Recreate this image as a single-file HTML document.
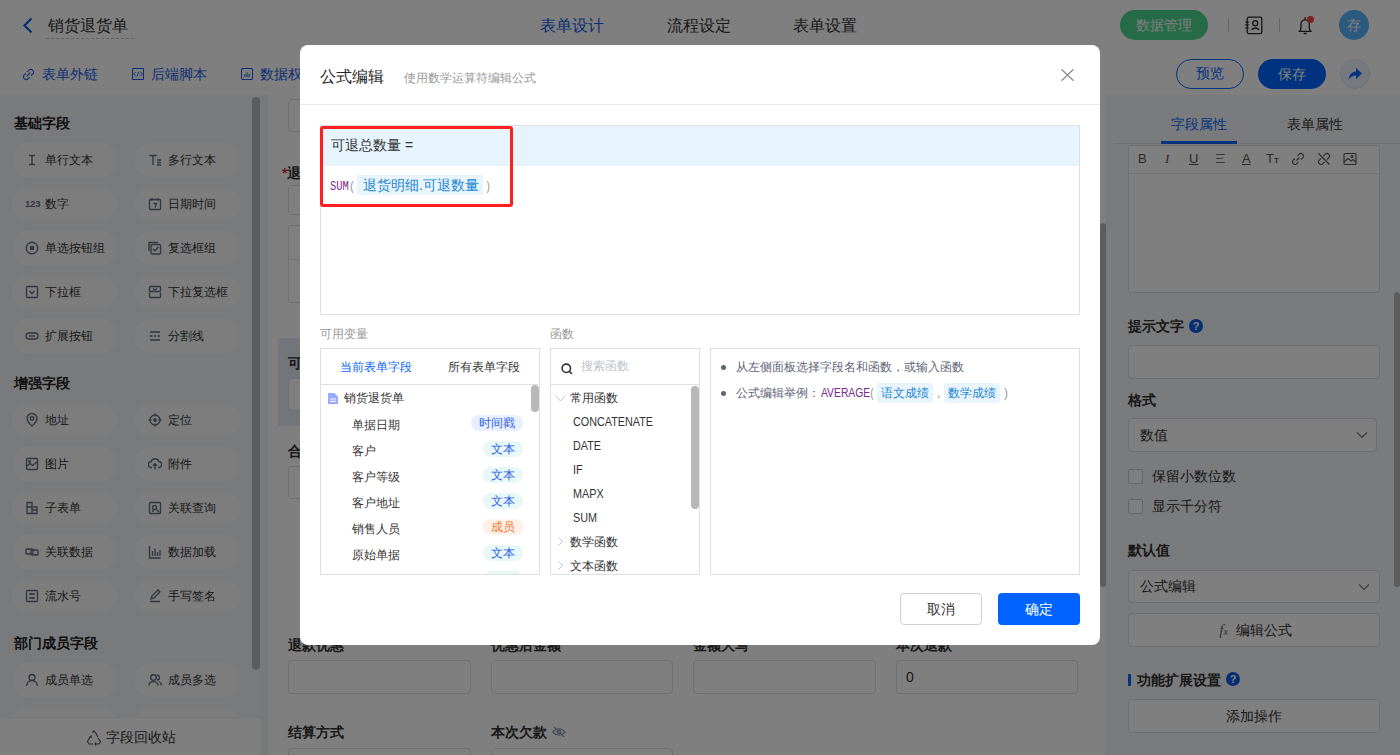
<!DOCTYPE html>
<html><head><meta charset="utf-8">
<style>
*{box-sizing:border-box;margin:0;padding:0}
html,body{width:1400px;height:755px;overflow:hidden;background:#f0f2f5;font-family:"Liberation Sans",sans-serif;color:#333}
.a{position:absolute}
#hdr{left:0;top:0;width:1400px;height:51px;background:#fff;border-bottom:1px solid #e6e6e6}
#tb{left:0;top:50px;width:1400px;height:45px;background:#fff}
#lp{left:0;top:95px;width:262px;height:660px;background:#f3f4f8}
#mid{left:262px;top:95px;width:846px;height:660px;background:#f0f2f5}
#rp{left:1108px;top:95px;width:292px;height:660px;background:#f5f6f9}
#ov{left:0;top:0;width:1400px;height:755px;background:rgba(0,0,0,.5)}
#modal{left:300px;top:45px;width:800px;height:600px;background:#fff;border-radius:8px}
.st{font-size:14px;font-weight:bold;line-height:20px;color:#222}
.pill{width:105px;height:34px;border-radius:17px;background:#fafbfc}
.pill .ic{position:absolute;left:13px;top:10px;width:14px;height:14px;line-height:14px}
.pill .ic svg{display:block}
.pill .pt{position:absolute;left:33px;top:8px;font-size:12px;line-height:18px;color:#333}
.lbl{font-size:14px;font-weight:bold;line-height:20px;color:#333}
.inp{border:1px solid #dcdfe6;border-radius:4px;background:#fff}
.rtb span,.rtb svg{position:absolute;top:5px;font-size:13px;line-height:18px;color:#555}
.q{width:14px;height:14px;border-radius:50%;background:#0a5ce6;color:#fff;font-size:11px;font-weight:bold;line-height:14px;text-align:center}
.cb{width:15px;height:15px;border:1px solid #c8cbd2;border-radius:2px;background:#fff}
.vr{position:absolute;left:0;width:220px;height:20px}
.vr span{position:absolute;left:31px;top:1px;font-size:12px;line-height:17px;color:#333}
.vr b{position:absolute;left:162px;top:-1px;width:40px;height:16px;border-radius:8px;font-weight:normal;font-size:12px;line-height:16px;text-align:center}
.bg1{background:#e8f0ff;color:#2f62ea}
.bg2{background:#e8f7f7;color:#2f62ea}
.bg3{background:#fff0e8;color:#ee7a30}
.fn{position:absolute;left:22px;font-size:12px;line-height:17px;color:#333;transform:scaleX(.9);transform-origin:0 0}
</style></head>
<body>
<div id="hdr" class="a">
  <svg class="a" style="left:22px;top:17px" width="12" height="17" viewBox="0 0 12 17"><path d="M9.5 1.5 L2.5 8.5 L9.5 15.5" fill="none" stroke="#0a5ce6" stroke-width="2.2"/></svg>
  <div class="a" style="left:48px;top:15px;font-size:16px;color:#333;line-height:22px">销货退货单</div>
  <div class="a" style="left:46px;top:38px;width:88px;border-top:1px dashed #c8c8c8"></div>
  <div class="a" style="left:540px;top:15px;font-size:16px;color:#1a5ce6;line-height:22px">表单设计</div>
  <div class="a" style="left:667px;top:15px;font-size:16px;color:#333;line-height:22px">流程设定</div>
  <div class="a" style="left:793px;top:15px;font-size:16px;color:#333;line-height:22px">表单设置</div>
  <div class="a" style="left:1120px;top:10px;width:88px;height:30px;border-radius:15px;background:#4cd68e;color:#fff;font-size:14px;line-height:30px;text-align:center">数据管理</div>
  <div class="a" style="left:1228px;top:18px;width:1px;height:14px;background:#ccc"></div>
  <svg class="a" style="left:1245px;top:16px" width="18" height="19" viewBox="0 0 18 19" fill="none" stroke="#2a2a2a" stroke-width="1.3"><rect x="2.2" y="1.2" width="14.6" height="16.4" rx="1.6"/><circle cx="10.3" cy="7.2" r="2.5"/><path d="M6.5 13.8Q10.3 10.2 14.1 13.8"/><path d="M0.3 6.1h3.6M0.3 8.9h3.6M0.3 12h3.6" stroke-width="1.1"/></svg>
  <div class="a" style="left:1279px;top:18px;width:1px;height:14px;background:#ccc"></div>
  <svg class="a" style="left:1296px;top:15px" width="20" height="20" viewBox="0 0 20 20" fill="none" stroke="#2a2a2a" stroke-width="1.3"><path d="M2.6 16.3H15.7M3.6 16.3Q5 15 5 12.5V9A4.15 4.15 0 0 1 13.3 9V12.5Q13.3 15 14.7 16.3M9.15 2.2V4.8M7.6 18.5H10.7"/></svg>
  <div class="a" style="left:1307px;top:16px;width:6.5px;height:6.5px;border-radius:50%;background:#f04848"></div>
  <div class="a" style="left:1339px;top:10px;width:30px;height:30px;border-radius:50%;background:#5ab4ff;color:#fff;font-size:14px;line-height:30px;text-align:center">存</div>
</div>
<div id="tb" class="a">
  
  <svg class="a" style="left:22px;top:17.5px" width="13" height="13" viewBox="0 0 13 13" fill="none" stroke="#1a5ce6" stroke-width="1.05"><path d="M4.6 8.4L8.4 4.6"/><path d="M5.3 3.9L7.6 1.6A2.95 2.95 0 0 1 11.4 5.4L9.1 7.7M7.7 9.1L5.4 11.4A2.95 2.95 0 0 1 1.6 7.6L3.9 5.3"/></svg>
  <div class="a" style="left:42px;top:14px;font-size:14px;color:#1a5ce6;line-height:20px">表单外链</div>
  <svg class="a" style="left:132px;top:18px" width="12" height="12" viewBox="0 0 12 12" fill="none" stroke="#1a5ce6" stroke-width="1.05"><rect x="0.5" y="0.5" width="11" height="11" rx="0.8"/><path d="M3.6 3.9L1.7 6L3.6 8.1M8.4 3.9L10.3 6L8.4 8.1M7 3.6L5 8.4" stroke-width="0.9"/></svg>
  <div class="a" style="left:151px;top:14px;font-size:14px;color:#1a5ce6;line-height:20px">后端脚本</div>
  <svg class="a" style="left:241px;top:18px" width="12" height="12" viewBox="0 0 12 12" fill="none" stroke="#1a5ce6" stroke-width="1.05"><rect x="0.5" y="0.5" width="11" height="11" rx="1.2"/><path d="M3.8 9V6.3M6 9V4.5M8.2 9V5.8"/></svg>
  <div class="a" style="left:260px;top:14px;font-size:14px;color:#1a5ce6;line-height:20px">数据权限</div>
  <div class="a" style="left:1176px;top:9px;width:68px;height:30px;border-radius:15px;border:1.5px solid #0a66ff;color:#0a66ff;font-size:14px;line-height:27px;text-align:center">预览</div>
  <div class="a" style="left:1258px;top:9px;width:68px;height:30px;border-radius:15px;background:#0066ff;color:#fff;font-size:14px;line-height:30px;text-align:center">保存</div>
  <div class="a" style="left:1340px;top:9px;width:30px;height:30px;border-radius:50%;background:#eef3ff;border:1px solid #d8e2f5"></div>
  <svg class="a" style="left:1347px;top:16px" width="16" height="16" viewBox="0 0 16 16"><path d="M9 2 L15 7.5 L9 13 V9.5 Q4 9.5 1.5 14 Q2 6 9 5.5 Z" fill="#0a66ff"/></svg>
</div>
<div id="lp" class="a"><div class="a st" style="left:14px;top:18px">基础字段</div>
<div class="a pill" style="left:12px;top:48px"><span class="ic"><svg width="14" height="14" viewBox="0 0 14 14" fill="none" stroke="#646c80" stroke-width="1.35"><path d="M4 2.5h6M4 11.5h6M7 2.5v9"/></svg></span><span class="pt">单行文本</span></div>
<div class="a pill" style="left:135px;top:48px"><span class="ic"><svg width="14" height="14" viewBox="0 0 14 14" fill="none" stroke="#646c80" stroke-width="1.35"><path d="M1.5 2.5h7M5 2.5v9.5M9 7h4M9 9.5h4M9 12h4"/></svg></span><span class="pt">多行文本</span></div>
<div class="a pill" style="left:12px;top:92px"><span class="ic"><span style="font-size:9.5px;font-weight:bold;color:#646c80;letter-spacing:-0.2px;position:relative;top:-2px">123</span></span><span class="pt">数字</span></div>
<div class="a pill" style="left:135px;top:92px"><span class="ic"><svg width="14" height="14" viewBox="0 0 14 14" fill="none" stroke="#646c80" stroke-width="1.35"><rect x="1.5" y="2.5" width="11" height="10" rx="1"/><path d="M4 1v3M10 1v3M5.5 6.5h3l-1.5 4"/></svg></span><span class="pt">日期时间</span></div>
<div class="a pill" style="left:12px;top:136px"><span class="ic"><svg width="14" height="14" viewBox="0 0 14 14" fill="none" stroke="#646c80" stroke-width="1.35"><circle cx="7" cy="7" r="5.8"/><circle cx="7" cy="7" r="1.6" fill="#646c80"/></svg></span><span class="pt">单选按钮组</span></div>
<div class="a pill" style="left:135px;top:136px"><span class="ic"><svg width="14" height="14" viewBox="0 0 14 14" fill="none" stroke="#646c80" stroke-width="1.35"><path d="M1 10V1.5h9"/><rect x="3" y="3.5" width="9.5" height="9.5" rx="1"/><path d="M5 8l1.8 1.8L10.5 6"/></svg></span><span class="pt">复选框组</span></div>
<div class="a pill" style="left:12px;top:180px"><span class="ic"><svg width="14" height="14" viewBox="0 0 14 14" fill="none" stroke="#646c80" stroke-width="1.35"><rect x="1.5" y="1.5" width="11" height="11" rx="1"/><path d="M4.5 6l2.5 2.5L9.5 6"/></svg></span><span class="pt">下拉框</span></div>
<div class="a pill" style="left:135px;top:180px"><span class="ic"><svg width="14" height="14" viewBox="0 0 14 14" fill="none" stroke="#646c80" stroke-width="1.35"><rect x="1.5" y="1.5" width="11" height="5" rx="1"/><path d="M1.5 7.5v4a1 1 0 0 0 1 1h9a1 1 0 0 0 1-1v-4M5 3.5l2 1.5 2-1.5"/></svg></span><span class="pt">下拉复选框</span></div>
<div class="a pill" style="left:12px;top:224px"><span class="ic"><svg width="14" height="14" viewBox="0 0 14 14" fill="none" stroke="#646c80" stroke-width="1.35"><rect x="1" y="4" width="12" height="6" rx="3"/><path d="M4 7h6"/></svg></span><span class="pt">扩展按钮</span></div>
<div class="a pill" style="left:135px;top:224px"><span class="ic"><svg width="14" height="14" viewBox="0 0 14 14" fill="none" stroke="#646c80" stroke-width="1.35"><path d="M2 3h10M2 11h10M2 7h2.5M6 7h2M9.5 7h2.5"/></svg></span><span class="pt">分割线</span></div>
<div class="a st" style="left:14px;top:278px">增强字段</div>
<div class="a pill" style="left:12px;top:308px"><span class="ic"><svg width="14" height="14" viewBox="0 0 14 14" fill="none" stroke="#646c80" stroke-width="1.35"><path d="M7 13S2 8.5 2 5.5a5 5 0 0 1 10 0C12 8.5 7 13 7 13z"/><circle cx="7" cy="5.5" r="1.8"/></svg></span><span class="pt">地址</span></div>
<div class="a pill" style="left:135px;top:308px"><span class="ic"><svg width="14" height="14" viewBox="0 0 14 14" fill="none" stroke="#646c80" stroke-width="1.35"><circle cx="7" cy="7" r="5"/><circle cx="7" cy="7" r="1.2" fill="#646c80"/><path d="M7 0.5v3M7 10.5v3M0.5 7h3M10.5 7h3"/></svg></span><span class="pt">定位</span></div>
<div class="a pill" style="left:12px;top:352px"><span class="ic"><svg width="14" height="14" viewBox="0 0 14 14" fill="none" stroke="#646c80" stroke-width="1.35"><rect x="1.5" y="1.5" width="11" height="11" rx="1"/><path d="M1.5 9.5l3.5-3 2.5 2 5-4"/><circle cx="4.5" cy="4.5" r="0.8"/></svg></span><span class="pt">图片</span></div>
<div class="a pill" style="left:135px;top:352px"><span class="ic"><svg width="14" height="14" viewBox="0 0 14 14" fill="none" stroke="#646c80" stroke-width="1.35"><path d="M4 10.5H3.5a3 3 0 0 1-.3-6 4 4 0 0 1 7.6 0 3 3 0 0 1-.3 6H10M7 12.5V7M5 8.7l2-2 2 2"/></svg></span><span class="pt">附件</span></div>
<div class="a pill" style="left:12px;top:396px"><span class="ic"><svg width="14" height="14" viewBox="0 0 14 14" fill="none" stroke="#646c80" stroke-width="1.35"><path d="M2 1.5h5v11H2zM7 6h5v6.5H7M2 6h5M7 9h5"/></svg></span><span class="pt">子表单</span></div>
<div class="a pill" style="left:135px;top:396px"><span class="ic"><svg width="14" height="14" viewBox="0 0 14 14" fill="none" stroke="#646c80" stroke-width="1.35"><rect x="1.5" y="1.5" width="11" height="11" rx="1"/><circle cx="6.5" cy="6.5" r="2"/><path d="M8 8l3 3M4 10h2"/></svg></span><span class="pt">关联查询</span></div>
<div class="a pill" style="left:12px;top:440px"><span class="ic"><svg width="14" height="14" viewBox="0 0 14 14" fill="none" stroke="#646c80" stroke-width="1.35"><rect x="1" y="4" width="7" height="5" rx="1"/><rect x="6" y="5" width="7" height="5" rx="1"/></svg></span><span class="pt">关联数据</span></div>
<div class="a pill" style="left:135px;top:440px"><span class="ic"><svg width="14" height="14" viewBox="0 0 14 14" fill="none" stroke="#646c80" stroke-width="1.35"><path d="M1.5 1v12h11M4.5 11V6M7 11V3.5M9.5 11V7M12 11V5"/></svg></span><span class="pt">数据加载</span></div>
<div class="a pill" style="left:12px;top:484px"><span class="ic"><svg width="14" height="14" viewBox="0 0 14 14" fill="none" stroke="#646c80" stroke-width="1.35"><rect x="1.5" y="1.5" width="11" height="11" rx="1"/><path d="M4 5h6M4 9h6M6 4v2M8 8v2"/></svg></span><span class="pt">流水号</span></div>
<div class="a pill" style="left:135px;top:484px"><span class="ic"><svg width="14" height="14" viewBox="0 0 14 14" fill="none" stroke="#646c80" stroke-width="1.35"><path d="M2 12.5h10M3 10l1-3 6-6 2 2-6 6z"/></svg></span><span class="pt">手写签名</span></div>
<div class="a st" style="left:14px;top:538px">部门成员字段</div>
<div class="a pill" style="left:12px;top:568px"><span class="ic"><svg width="14" height="14" viewBox="0 0 14 14" fill="none" stroke="#646c80" stroke-width="1.35"><circle cx="7" cy="4.5" r="3"/><path d="M1.5 13a5.5 5.5 0 0 1 11 0"/></svg></span><span class="pt">成员单选</span></div>
<div class="a pill" style="left:135px;top:568px"><span class="ic"><svg width="14" height="14" viewBox="0 0 14 14" fill="none" stroke="#646c80" stroke-width="1.35"><circle cx="5.5" cy="4.5" r="2.8"/><path d="M0.8 12.5a4.8 4.8 0 0 1 9.4 0M9 2a2.5 2.5 0 0 1 0 5M11 8.5a4 4 0 0 1 2.3 4"/></svg></span><span class="pt">成员多选</span></div>
<div class="a pill" style="left:12px;top:612px"><span class="ic"><svg width="14" height="14" viewBox="0 0 14 14" fill="none" stroke="#646c80" stroke-width="1.35"><rect x="2" y="2" width="10" height="10"/></svg></span><span class="pt">部门单选</span></div>
<div class="a pill" style="left:135px;top:612px"><span class="ic"><svg width="14" height="14" viewBox="0 0 14 14" fill="none" stroke="#646c80" stroke-width="1.35"><rect x="2" y="2" width="10" height="10"/></svg></span><span class="pt">部门多选</span></div><div class="a" style="left:252px;top:2px;width:8px;height:573px;border-radius:4px;background:#b8b8b8"></div><div class="a" style="left:0;top:622px;width:261px;height:38px;background:#fff;border-top:1px solid #eee"><svg class="a" style="left:86px;top:12px" width="16" height="16" viewBox="0 0 16 16" fill="none" stroke="#555" stroke-width="1.1"><path d="M6.5 2.5L8 1l1.5 1.5 2.5 4.5M4 7l-2.5 4.5L3 14h4M9 14h4l1.5-2.5L12 8M10 12.5L9 14l1 1.5M5.5 5.5L4 7l2 .5"/></svg><div class="a" style="left:106px;top:9px;font-size:14px;color:#333;line-height:20px">字段回收站</div></div></div><div id="mid" class="a">
  <div class="a" style="left:6px;top:0;width:838px;height:660px;background:#fff"></div>
  <div class="a inp" style="left:26px;top:4px;width:300px;height:33px"></div>
  <div class="a lbl" style="left:20px;top:68px"><span style="color:#e03030">*</span>退货明细</div>
  <div class="a inp" style="left:26px;top:90px;width:300px;height:30px"></div>
  <div class="a" style="left:26px;top:130px;width:800px;height:78px;border:1px solid #e4e4e4;border-radius:3px"></div>
  <div class="a" style="left:26px;top:164px;width:800px;height:1px;background:#e4e4e4"></div>
  <div class="a" style="left:16px;top:243px;width:820px;height:88px;background:#e4eaf6"></div>
  <div class="a lbl" style="left:26px;top:258px">可退总数量</div>
  <div class="a inp" style="left:26px;top:283px;width:182px;height:33px"></div>
  <div class="a lbl" style="left:26px;top:346px">合计金额</div>
  <div class="a inp" style="left:26px;top:371px;width:182px;height:33px"></div>
  <div class="a lbl" style="left:26px;top:540px">退款优惠</div>
  <div class="a lbl" style="left:229px;top:540px">优惠后金额</div>
  <div class="a lbl" style="left:431px;top:540px">金额大写</div>
  <div class="a lbl" style="left:634px;top:540px">本次退款</div>
  <div class="a inp" style="left:26px;top:565px;width:183px;height:34px"></div>
  <div class="a inp" style="left:229px;top:565px;width:182px;height:34px"></div>
  <div class="a inp" style="left:431px;top:565px;width:183px;height:34px"></div>
  <div class="a inp" style="left:634px;top:565px;width:182px;height:34px;font-size:14px;line-height:32px;padding-left:9px;color:#333">0</div>
  <div class="a lbl" style="left:26px;top:627px">结算方式</div>
  <div class="a lbl" style="left:229px;top:627px">本次欠款</div>
  <svg class="a" style="left:290px;top:631px" width="14" height="12" viewBox="0 0 14 12" fill="none" stroke="#8a93aa" stroke-width="1.1"><path d="M0.8 6Q7 -0.5 13.2 6Q7 12.5 0.8 6Z"/><circle cx="7" cy="6" r="1.9"/><path d="M1.8 0.8L12.2 11.2"/></svg>
  <div class="a inp" style="left:26px;top:653px;width:183px;height:34px"></div>
  <div class="a inp" style="left:229px;top:653px;width:182px;height:34px"></div>
  <div class="a" style="left:838px;top:128px;width:6px;height:364px;border-radius:3px;background:#b8b8b8"></div>
</div>
<div id="rp" class="a">
  <div class="a" style="left:63px;top:19px;font-size:14px;color:#0a66ff;line-height:20px">字段属性</div>
  <div class="a" style="left:179px;top:19px;font-size:14px;color:#333;line-height:20px">表单属性</div>
  <div class="a" style="left:6px;top:48px;width:286px;height:1px;background:#e0e2e6"></div>
  <div class="a" style="left:53px;top:46px;width:76px;height:3px;background:#0a66ff"></div>
  <div class="a" style="left:20px;top:50px;width:252px;height:148px;border:1px solid #dcdfe4;border-radius:3px;background:#fff"></div>
  <div class="a" style="left:20px;top:78px;width:251px;height:1px;background:#e4e6ea"></div>
  <div class="a rtb" style="left:20px;top:50px;width:251px;height:28px">
    <span style="left:10px;font-family:'Liberation Sans'">B</span>
    <span style="left:37px;font-style:italic;font-family:'Liberation Serif'">I</span>
    <span style="left:61px;text-decoration:underline;font-family:'Liberation Sans'">U</span>
    <svg style="left:87px;top:8px" width="12" height="11" viewBox="0 0 12 11" fill="none" stroke="#666" stroke-width="0.9"><path d="M1 1.5h9M1 5.5h7M1 9.5h9"/></svg>
    <span style="left:114px;text-decoration:underline;font-family:'Liberation Sans'">A</span>
    <span style="left:138px;font-family:'Liberation Sans'">T<small style="font-size:8px;font-weight:bold">T</small></span>
    <svg style="left:163px;top:7px" width="14" height="14" viewBox="0 0 14 14" fill="none" stroke="#555" stroke-width="1.1"><path d="M5.5 8.5l3-3M6.5 4L8.2 2.3a2.2 2.2 0 0 1 3.5 3.5L10 7.5M7.5 10l-1.7 1.7a2.2 2.2 0 0 1-3.5-3.5L4 6.5"/></svg>
    <svg style="left:189px;top:7px" width="14" height="14" viewBox="0 0 14 14" fill="none" stroke="#555" stroke-width="1.1"><path d="M1.5 1.5l11 11M6.5 4L8.2 2.3a2.2 2.2 0 0 1 3.5 3.5L10 7.5M7.5 10l-1.7 1.7a2.2 2.2 0 0 1-3.5-3.5L4 6.5"/></svg>
    <svg style="left:215px;top:7px" width="14" height="14" viewBox="0 0 14 14" fill="none" stroke="#555" stroke-width="1.1"><rect x="1" y="1.5" width="12" height="11" rx="1"/><path d="M1 10l4-3.5 3 2.5 2-1.5 3 2.5"/><circle cx="9" cy="4.5" r="1"/></svg>
  </div>
  <div class="a lbl" style="left:20px;top:221px">提示文字</div>
  <div class="a q" style="left:81px;top:224px">?</div>
  <div class="a inp" style="left:20px;top:250px;width:252px;height:34px"></div>
  <div class="a lbl" style="left:20px;top:295px">格式</div>
  <div class="a inp" style="left:20px;top:323px;width:249px;height:34px;font-size:14px;line-height:32px;padding-left:11px;color:#333">数值</div>
  <svg class="a" style="left:248px;top:336px" width="12" height="8" viewBox="0 0 12 8" fill="none" stroke="#777" stroke-width="1.2"><path d="M1 1.5l5 5 5-5"/></svg>
  <div class="a cb" style="left:20px;top:374px"></div>
  <div class="a" style="left:44px;top:371px;font-size:14px;line-height:20px;color:#333">保留小数位数</div>
  <div class="a cb" style="left:20px;top:404px"></div>
  <div class="a" style="left:44px;top:401px;font-size:14px;line-height:20px;color:#333">显示千分符</div>
  <div class="a lbl" style="left:20px;top:445px">默认值</div>
  <div class="a inp" style="left:20px;top:475px;width:252px;height:33px;font-size:14px;line-height:31px;padding-left:11px;color:#333">公式编辑</div>
  <svg class="a" style="left:250px;top:488px" width="12" height="8" viewBox="0 0 12 8" fill="none" stroke="#777" stroke-width="1.2"><path d="M1 1.5l5 5 5-5"/></svg>
  <div class="a inp" style="left:20px;top:518px;width:252px;height:34px;font-size:14px;line-height:32px;text-align:center;color:#333;padding-left:3px"><i style="font-family:'Liberation Serif';font-size:15px;color:#666">f<small style="font-size:10px">x</small></i>&nbsp; 编辑公式</div>
  <div class="a" style="left:20px;top:579px;width:3px;height:12px;background:#0a66ff"></div>
  <div class="a lbl" style="left:29px;top:575px">功能扩展设置</div>
  <div class="a q" style="left:118px;top:577px">?</div>
  <div class="a inp" style="left:20px;top:604px;width:252px;height:34px;font-size:14px;line-height:32px;text-align:center;color:#333">添加操作</div>
  <div class="a" style="left:286px;top:197px;width:6px;height:295px;border-radius:3px;background:#b8b8b8"></div>
</div>
<div id="ov" class="a"></div><div id="modal" class="a">
  <div class="a" style="left:20px;top:21px;font-size:16px;line-height:22px;color:#262626">公式编辑</div>
  <div class="a" style="left:104px;top:25px;font-size:12px;line-height:17px;color:#999">使用数学运算符编辑公式</div>
  <svg class="a" style="left:761px;top:24px" width="13" height="12" viewBox="0 0 13 12" fill="none" stroke="#8a8a8a" stroke-width="1.3"><path d="M0.5 0.3l12 11.4M12.5 0.3l-12 11.4"/></svg>
  <div class="a" style="left:0;top:59px;width:800px;height:1px;background:#e8e8e8"></div>
  <!-- editor -->
  <div class="a" style="left:20px;top:80px;width:760px;height:190px;border:1px solid #e0e0e0"></div>
  <div class="a" style="left:21px;top:81px;width:758px;height:40px;background:#e6f4fe"></div>
  <div class="a" style="left:31px;top:90px;font-size:14px;line-height:20px;color:#333">可退总数量 =</div>
  <div class="a" style="left:30px;top:134px;font-family:'Liberation Mono',monospace;font-size:12.5px;line-height:16px;color:#7a2b8c;transform:scaleX(.84);transform-origin:0 0">SUM<span style="color:#999">(</span></div>
  <div class="a" style="left:57px;top:130px;width:126px;height:20px;border-radius:2px;background:#eaf4fc"></div>
  <div class="a" style="left:63px;top:130px;font-size:14px;line-height:20px;color:#1a88d2">退货明细.可退数量</div>
  <div class="a" style="left:185px;top:134px;font-family:'Liberation Mono',monospace;font-size:12.5px;line-height:16px;color:#999;transform:scaleX(.8);transform-origin:0 0">)</div>
  <div class="a" style="left:20px;top:81px;width:193px;height:81px;border:3px solid #ff1f1f;border-radius:3px"></div>
  <!-- labels -->
  <div class="a" style="left:20px;top:281px;font-size:12px;line-height:16px;color:#999">可用变量</div>
  <div class="a" style="left:250px;top:281px;font-size:12px;line-height:16px;color:#999">函数</div>
  <!-- variables -->
  <div class="a" style="left:20px;top:303px;width:220px;height:227px;border:1px solid #e0e0e0;overflow:hidden">
    <div class="a" style="left:19px;top:10px;font-size:12px;line-height:17px;color:#0a66ff">当前表单字段</div>
    <div class="a" style="left:127px;top:10px;font-size:12px;line-height:17px;color:#333">所有表单字段</div>
    <div class="a" style="left:0;top:35px;width:220px;height:1px;background:#e0e0e0"></div>
    <svg class="a" style="left:7px;top:44px" width="11" height="11" viewBox="0 0 11 11"><path d="M0 0h6.5l3.5 3.5v7.5H0z" fill="#97a8ff"/><path d="M2 6h6M2 8.3h6" stroke="#fff" stroke-width="1"/></svg>
    <div class="a" style="left:23px;top:41px;font-size:12px;line-height:17px;color:#333">销货退货单</div>
    <div class="vr" style="top:67px"><span>单据日期</span><b class="bg1" style="left:150px;width:52px">时间戳</b></div>
    <div class="vr" style="top:93px"><span>客户</span><b class="bg2">文本</b></div>
    <div class="vr" style="top:119px"><span>客户等级</span><b class="bg2">文本</b></div>
    <div class="vr" style="top:145px"><span>客户地址</span><b class="bg2">文本</b></div>
    <div class="vr" style="top:171px"><span>销售人员</span><b class="bg3">成员</b></div>
    <div class="vr" style="top:197px"><span>原始单据</span><b class="bg2">文本</b></div>
    <div class="vr" style="top:223px"><b class="bg2" style="color:transparent">子表</b></div>
    <div class="a" style="left:210px;top:36px;width:8px;height:27px;border-radius:4px;background:#b8b8b8"></div>
  </div>
  <!-- functions -->
  <div class="a" style="left:250px;top:303px;width:150px;height:227px;border:1px solid #e0e0e0;overflow:hidden">
    <svg class="a" style="left:10px;top:14px" width="12" height="12" viewBox="0 0 12 12" fill="none" stroke="#333" stroke-width="1.6"><circle cx="5.3" cy="5.3" r="4.2"/><path d="M8.4 8.4l2.6 2.6"/></svg>
    <div class="a" style="left:30px;top:9px;font-size:12px;line-height:17px;color:#c0c4cc">搜索函数</div>
    <div class="a" style="left:0;top:35px;width:150px;height:1px;background:#e0e0e0"></div>
    <svg class="a" style="left:4px;top:46px" width="11" height="7" viewBox="0 0 11 7" fill="none" stroke="#c0c4cc" stroke-width="1"><path d="M0.5 0.5l5 5.5 5-5.5"/></svg>
    <div class="a" style="left:19px;top:41px;font-size:12px;line-height:17px;color:#333">常用函数</div>
    <div class="fn" style="top:65px">CONCATENATE</div>
    <div class="fn" style="top:89px">DATE</div>
    <div class="fn" style="top:113px">IF</div>
    <div class="fn" style="top:137px">MAPX</div>
    <div class="fn" style="top:161px">SUM</div>
    <svg class="a" style="left:7px;top:188px" width="5" height="9" viewBox="0 0 5 9" fill="none" stroke="#c0c4cc" stroke-width="1"><path d="M0.5 0.5l4 4-4 4"/></svg>
    <div class="a" style="left:19px;top:185px;font-size:12px;line-height:17px;color:#333">数学函数</div>
    <svg class="a" style="left:7px;top:212px" width="5" height="9" viewBox="0 0 5 9" fill="none" stroke="#c0c4cc" stroke-width="1"><path d="M0.5 0.5l4 4-4 4"/></svg>
    <div class="a" style="left:19px;top:209px;font-size:12px;line-height:17px;color:#333">文本函数</div>
    <div class="a" style="left:140px;top:37px;width:8px;height:123px;border-radius:4px;background:#b8b8b8"></div>
  </div>
  <!-- description -->
  <div class="a" style="left:410px;top:303px;width:370px;height:227px;border:1px solid #e0e0e0">
    <div class="a" style="left:10px;top:16px;width:5px;height:5px;border-radius:50%;background:#5e6577"></div>
    <div class="a" style="left:25px;top:10px;font-size:12px;line-height:17px;color:#5e6577">从左侧面板选择字段名和函数，或输入函数</div>
    <div class="a" style="left:10px;top:42px;width:5px;height:5px;border-radius:50%;background:#5e6577"></div>
    <div class="a" style="left:25px;top:36px;font-size:12px;line-height:17px;color:#5e6577">公式编辑举例：</div><div class="a" style="left:110px;top:36px;font-size:12px;line-height:17px;color:#7a2b8c;transform:scaleX(.86);transform-origin:0 0">AVERAGE<span style="color:#999">(</span></div>
    <div class="a" style="left:166px;top:34px;width:56px;height:20px;border-radius:3px;background:#eaf4fd"></div>
    <div class="a" style="left:170px;top:36px;font-size:12px;line-height:17px;color:#1a88d2">语文成绩</div>
    <div class="a" style="left:226px;top:36px;font-size:12px;line-height:17px;color:#999">,</div>
    <div class="a" style="left:233px;top:34px;width:56px;height:20px;border-radius:3px;background:#eaf4fd"></div>
    <div class="a" style="left:237px;top:36px;font-size:12px;line-height:17px;color:#1a88d2">数学成绩</div>
    <div class="a" style="left:293px;top:36px;font-size:12px;line-height:17px;color:#999">)</div>
  </div>
  <!-- footer -->
  <div class="a" style="left:600px;top:548px;width:82px;height:32px;border:1px solid #d0d0d0;border-radius:4px;text-align:center;font-size:14px;line-height:30px;color:#333">取消</div>
  <div class="a" style="left:698px;top:548px;width:82px;height:32px;border-radius:4px;background:#0062ff;text-align:center;font-size:14px;line-height:32px;color:#fff">确定</div>
</div>
</body></html>
